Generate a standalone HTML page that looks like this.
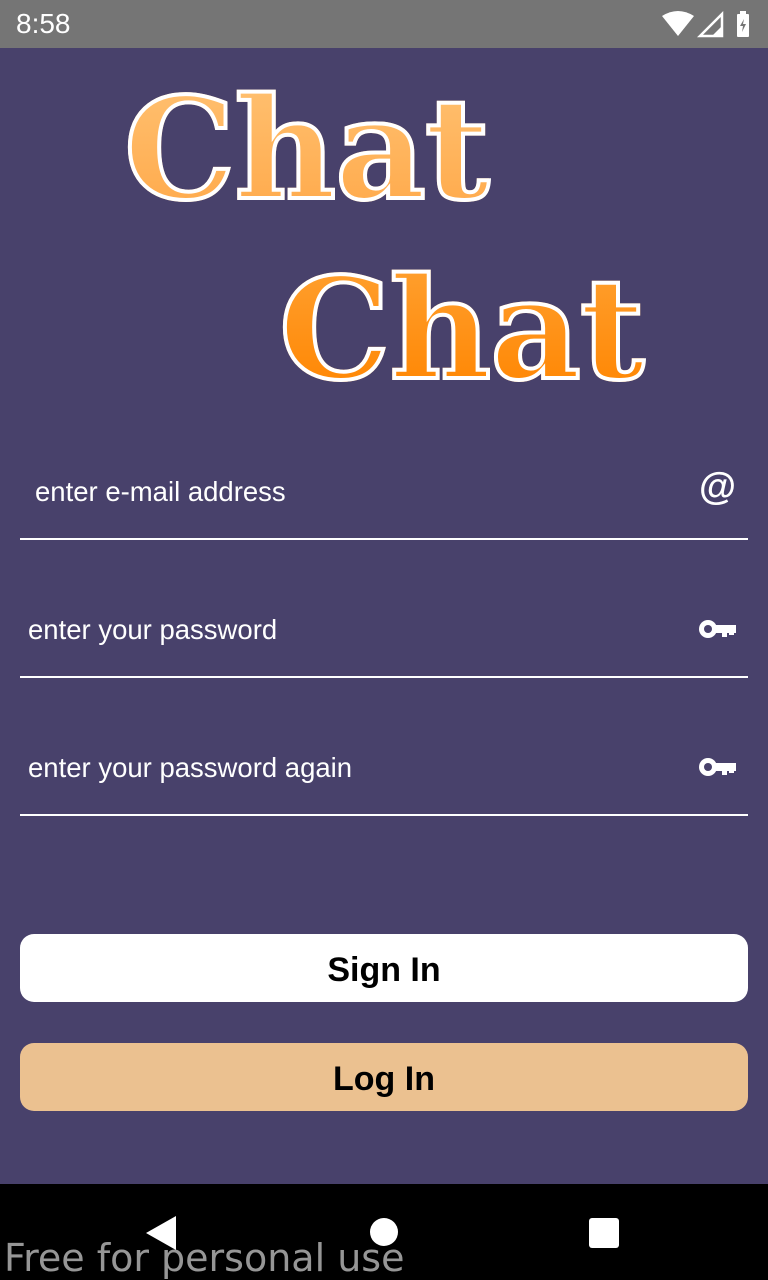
<!DOCTYPE html>
<html><head><style>
body{margin:0;width:768px;height:1280px;background:#48416b;position:relative;overflow:hidden;font-family:"Liberation Sans",Roboto,sans-serif}
.sb{position:absolute;top:0;left:0;width:768px;height:48px;background:#757575;color:#fff}
.chat{position:absolute;font-family:"DejaVu Serif",serif;font-weight:bold;font-size:140px;line-height:1;-webkit-text-stroke:4px #fff;paint-order:stroke fill;letter-spacing:-1px}
.field{position:absolute;left:20px;width:728px;border-bottom:2px solid #fff;height:40px;color:#fff;font-size:27.5px}
.btn{position:absolute;left:20px;width:728px;height:68px;border-radius:14px;text-align:center;line-height:72px;font-weight:bold;font-size:34px;color:#000}
.nav{position:absolute;top:1184px;left:0;width:768px;height:96px;background:#000}
</style></head><body>
<div class="sb">
<div style="position:absolute;left:16px;top:8px;font-size:28px">8:58</div>
<svg style="position:absolute;left:660px;top:10px" width="95" height="28" viewBox="0 0 95 28">
<path d="M2 6 Q18 -4 34 6 L18 26 Z" fill="#fff"/>
<path d="M40 26 L62 4 L62 26 Z" fill="none" stroke="#fff" stroke-width="2.5"/>
<path d="M52 26 L62 16 L62 26Z" fill="#fff"/>
<rect x="77" y="4" width="12" height="23" rx="1" fill="#fff"/><rect x="80" y="1" width="6" height="4" fill="#fff"/>
<path d="M84 9 L80 16 L83 16 L82 22 L86 14 L83 14Z" fill="#757575"/>
</svg>
</div>
<div class="chat" style="left:124px;top:80px;background:linear-gradient(#ffc070,#ffa94a);-webkit-background-clip:text;-webkit-text-fill-color:transparent">Chat</div>
<div class="chat" style="left:279px;top:260px;background:linear-gradient(#ffa030,#ff8500);-webkit-background-clip:text;-webkit-text-fill-color:transparent">Chat</div>

<div class="field" style="top:472px;height:66px"><span style="position:absolute;left:15px;top:4px">enter e-mail address</span>
<span style="position:absolute;right:12px;top:-6px;font-size:38px;font-weight:bold">@</span></div>
<div class="field" style="top:610px;height:66px"><span style="position:absolute;left:8px;top:4px">enter your password</span>
<svg style="position:absolute;right:12px;top:8px" width="38" height="22" viewBox="0 0 38 22"><circle cx="10" cy="11" r="9" fill="#fff"/><circle cx="10" cy="11" r="4" fill="#48416b"/><rect x="16" y="7" width="22" height="8" fill="#fff"/><rect x="24" y="12" width="5" height="7" fill="#fff"/><rect x="31" y="12" width="5" height="5" fill="#fff"/></svg></div>
<div class="field" style="top:748px;height:66px"><span style="position:absolute;left:8px;top:4px">enter your password again</span>
<svg style="position:absolute;right:12px;top:8px" width="38" height="22" viewBox="0 0 38 22"><circle cx="10" cy="11" r="9" fill="#fff"/><circle cx="10" cy="11" r="4" fill="#48416b"/><rect x="16" y="7" width="22" height="8" fill="#fff"/><rect x="24" y="12" width="5" height="7" fill="#fff"/><rect x="31" y="12" width="5" height="5" fill="#fff"/></svg></div>

<div class="btn" style="top:934px;background:#fff">Sign In</div>
<div class="btn" style="top:1043px;background:#ebc190">Log In</div>

<div class="nav">
<svg style="position:absolute;left:146px;top:32px" width="30" height="34"><path d="M30 0 L30 34 L0 17Z" fill="#fff"/></svg>
<div style="position:absolute;left:370px;top:34px;width:28px;height:28px;border-radius:50%;background:#fff"></div>
<div style="position:absolute;left:589px;top:34px;width:30px;height:30px;border-radius:3px;background:#fff"></div>
<div style="position:absolute;left:4px;top:52px;font-family:'DejaVu Sans',sans-serif;font-size:38px;color:rgba(200,200,200,0.75)">Free for personal use</div>
</div>
</body></html>
